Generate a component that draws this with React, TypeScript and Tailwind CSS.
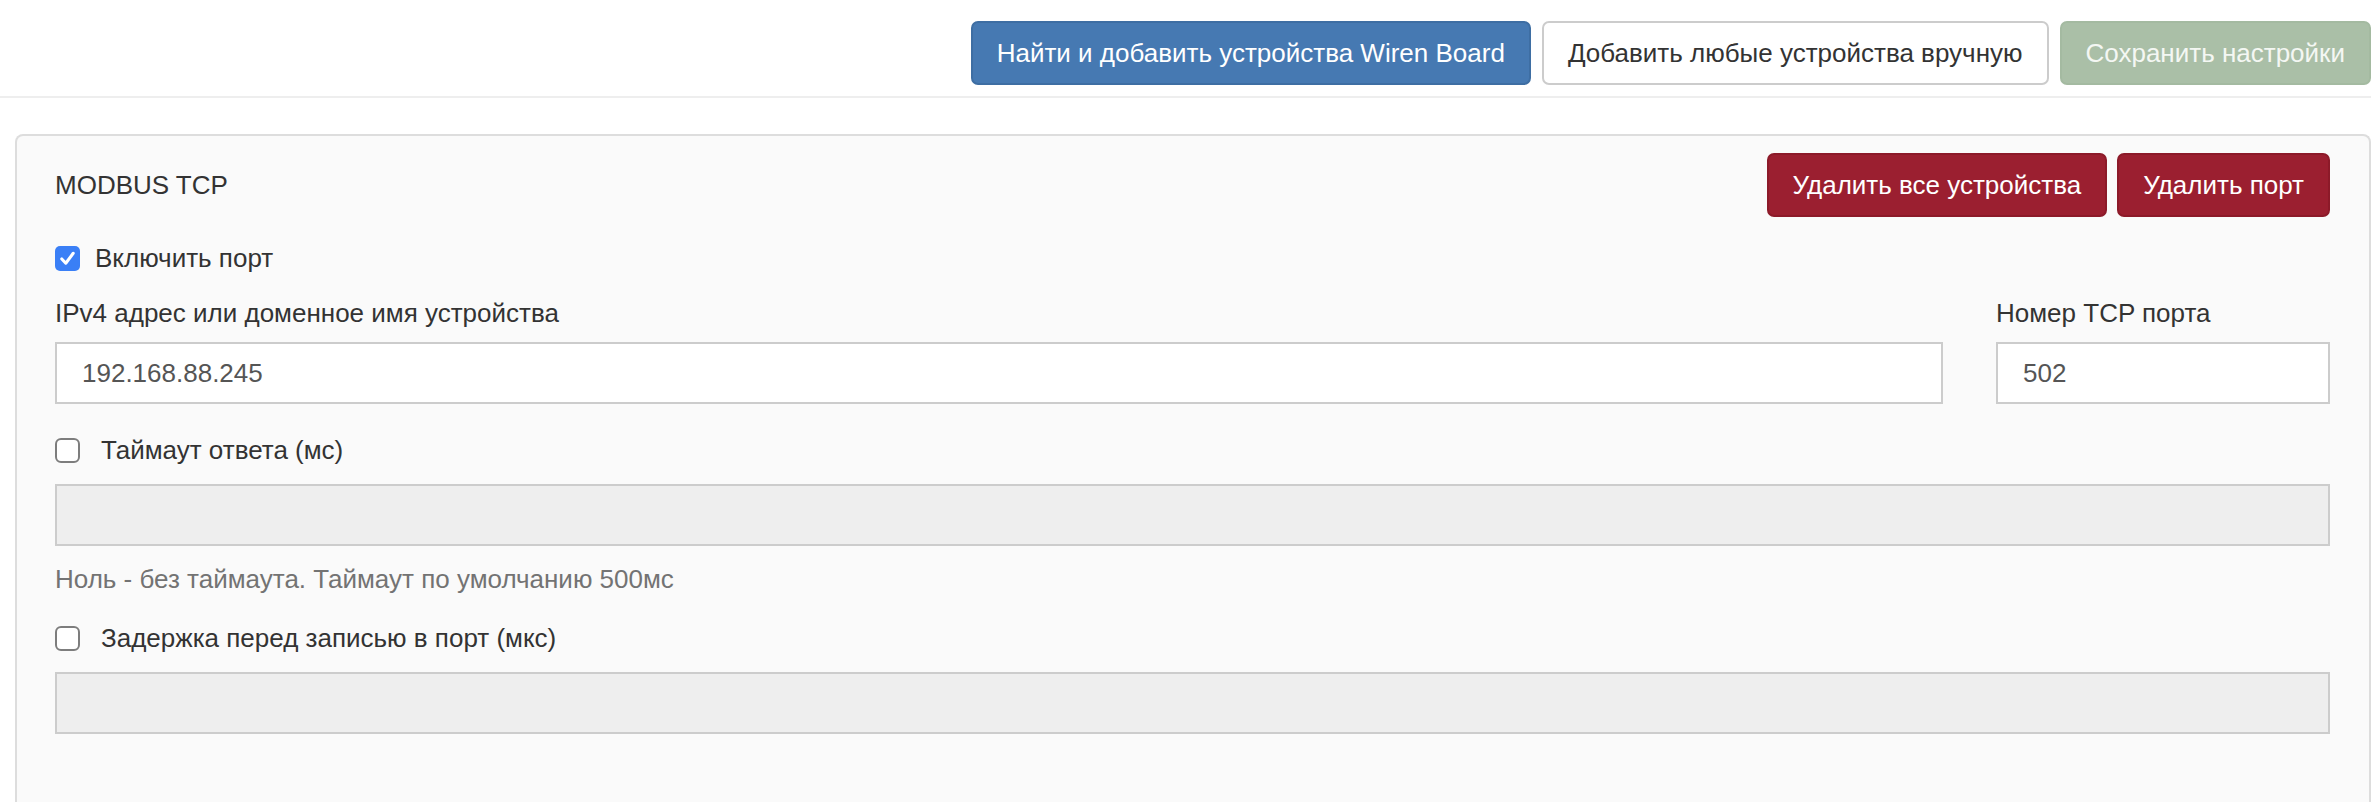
import type { ReactNode } from 'react'

const font = { fontFamily: '"Liberation Sans", Arial, sans-serif' }

const Check = ({ checked }: { checked?: boolean }) =>
  checked ? (
    <span className="w-[25px] h-[25px] rounded-[5px] bg-[#3a7ff6] flex items-center justify-center shrink-0">
      <svg width="19" height="19" viewBox="0 0 20 20" fill="none">
        <path d="M4 10.5 L8.2 15 L16 4.5" stroke="white" strokeWidth="3.2" strokeLinecap="round" strokeLinejoin="round" />
      </svg>
    </span>
  ) : (
    <span className="w-[25px] h-[25px] rounded-[6px] bg-white border-2 border-[#7d7d7d] shrink-0" />
  )

const CheckRow = ({ checked, label, gap }: { checked?: boolean; label: string; gap: string }) => (
  <div className={`flex items-center h-[37px] ${gap}`}>
    <Check checked={checked} />
    <span>{label}</span>
  </div>
)

const Btn = ({ className, children }: { className: string; children: ReactNode }) => (
  <button className={`h-[64px] px-[24px] border-2 rounded-[7px] leading-[37px] whitespace-nowrap ${className}`}>
    {children}
  </button>
)

const Input = ({ value, disabled }: { value?: string; disabled?: boolean }) => (
  <div
    className={`h-[62px] border-2 border-[#cccccc] flex items-center px-[25px] text-[#555555] ${
      disabled ? 'bg-[#eeeeee]' : 'bg-white'
    }`}
  >
    {value}
  </div>
)

export default function App() {
  return (
    <div className="min-h-[802px] bg-white text-[#333333] text-[26px] leading-[37px] pr-[9px]" style={font}>
      <div className="flex justify-end gap-[11px] pt-[21px] pb-[11px] border-b-2 border-[#eeeeee]">
        <Btn className="bg-[#4679b2] border-[#3e6ea3] text-white">Найти и добавить устройства Wiren Board</Btn>
        <Btn className="bg-white border-[#cccccc] text-[#333333]">Добавить любые устройства вручную</Btn>
        <Btn className="bg-[#aabfa7] border-[#a4baa1] text-[#f4f7f3]">Сохранить настройки</Btn>
      </div>

      <div className="ml-[15px] mt-[36px] border-2 border-b-0 border-[#dddddd] rounded-t-[8px] bg-[#fafafa] pl-[38px] pr-[39px] pt-[17px] pb-[80px]">
        <div className="flex items-center justify-between">
          <span>MODBUS TCP</span>
          <div className="flex gap-[10px]">
            <Btn className="bg-[#9b1f30] border-[#8c1a29] text-white">Удалить все устройства</Btn>
            <Btn className="bg-[#9b1f30] border-[#8c1a29] text-white">Удалить порт</Btn>
          </div>
        </div>

        <div className="mt-[23px]">
          <CheckRow checked label="Включить порт" gap="gap-[15px]" />
        </div>

        <div className="flex gap-[53px] mt-[18px]">
          <div className="flex-1 flex flex-col gap-[10px]">
            <span>IPv4 адрес или доменное имя устройства</span>
            <Input value="192.168.88.245" />
          </div>
          <div className="w-[334px] flex flex-col gap-[10px]">
            <span>Номер TCP порта</span>
            <Input value="502" />
          </div>
        </div>

        <div className="mt-[28px]">
          <CheckRow label="Таймаут ответа (мс)" gap="gap-[21px]" />
        </div>
        <div className="mt-[15px]">
          <Input disabled />
        </div>
        <p className="mt-[15px] text-[#737373]">Ноль - без таймаута. Таймаут по умолчанию 500мс</p>

        <div className="mt-[22px]">
          <CheckRow label="Задержка перед записью в порт (мкс)" gap="gap-[21px]" />
        </div>
        <div className="mt-[15px]">
          <Input disabled />
        </div>
      </div>
    </div>
  )
}
